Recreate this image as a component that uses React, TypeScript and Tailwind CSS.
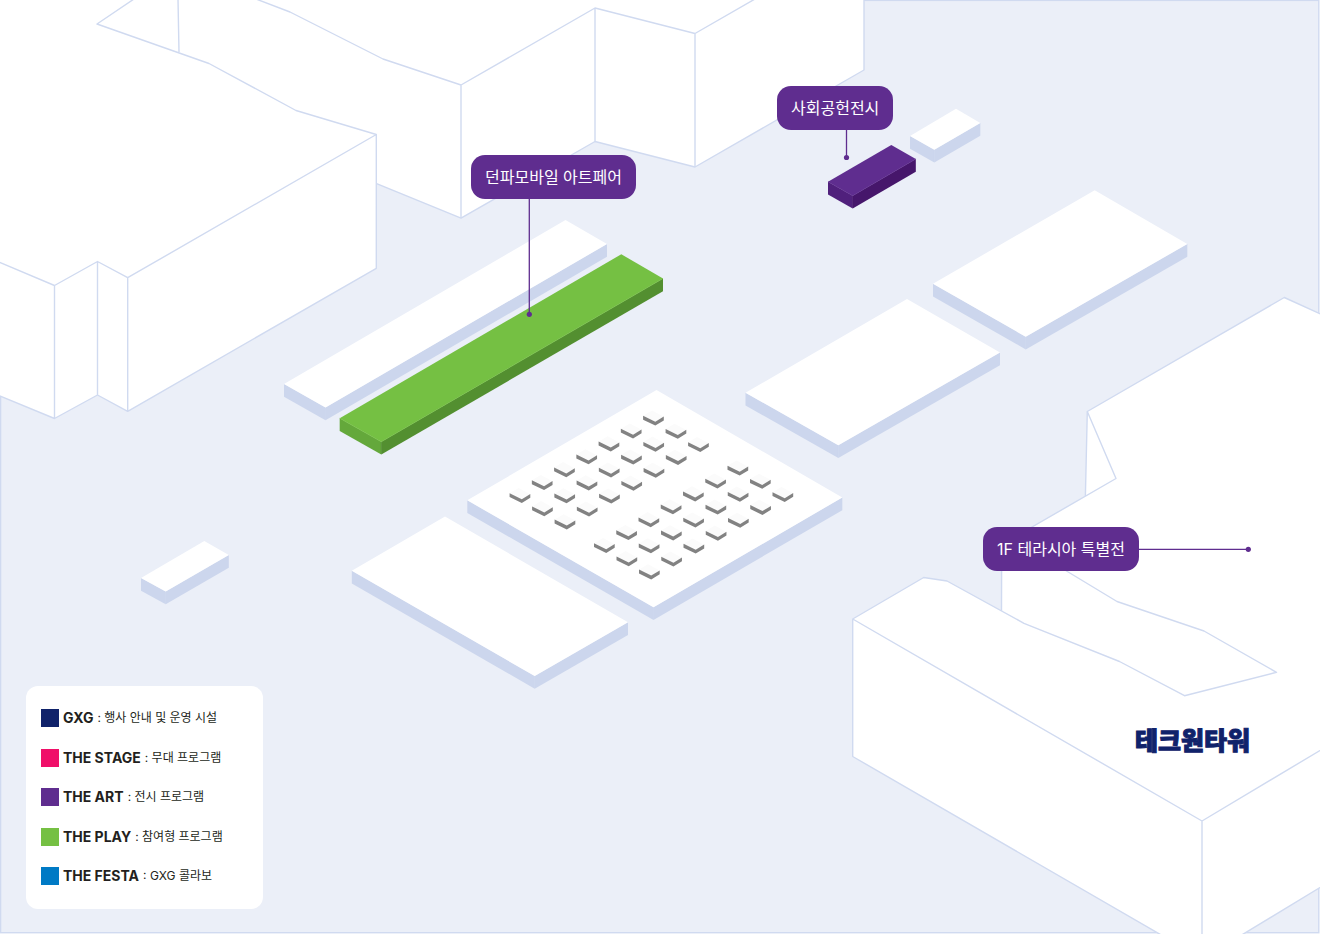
type Point = [number, number];

const MAP_WIDTH = 1320;
const MAP_HEIGHT = 934;

const FONT = "font-['Inter','Noto_Sans_CJK_KR',sans-serif]";

interface Slab {
  id: string;
  left: Point;
  top: Point;
  right: Point;
  bottom: Point;
  colors: [string, string, string];
}

const PLAIN: [string, string, string] = ['#ffffff', '#ccd6ed', '#ccd6ed'];
const ART: [string, string, string] = ['#5f2d8f', '#50207c', '#46166b'];
const PLAY: [string, string, string] = ['#75c043', '#64a83b', '#538f30'];

const SLABS: Slab[] = [
  { id: 'long', left: [284, 384], top: [565.5, 220], right: [607, 244], bottom: [325.5, 407.5], colors: PLAIN },
  { id: 'play', left: [339.7, 418.3], top: [621.3, 254.2], right: [663, 278.5], bottom: [381.3, 441.8], colors: PLAY },
  { id: 'north-small', left: [910, 136], top: [956, 108.7], right: [980.3, 123], bottom: [934.3, 149.7], colors: PLAIN },
  { id: 'art', left: [828, 181.7], top: [891.3, 145], right: [915.8, 159], bottom: [852.7, 195.7], colors: ART },
  { id: 'east', left: [933, 283.7], top: [1094.7, 190.3], right: [1187.3, 244], bottom: [1025.7, 336.7], colors: PLAIN },
  { id: 'middle', left: [745.5, 392.7], top: [907, 299], right: [1000, 352.5], bottom: [838.3, 445.3], colors: PLAIN },
  { id: 'market', left: [467.3, 500.3], top: [656.5, 390], right: [842.3, 497.5], bottom: [653.5, 607.2], colors: PLAIN },
  { id: 'south', left: [351.8, 570.8], top: [445, 516.5], right: [628, 622.3], bottom: [534.7, 676], colors: PLAIN },
  { id: 'west-small', left: [141, 578], top: [204.3, 541], right: [228.8, 555], bottom: [165.7, 591.5], colors: PLAIN },
];

const DEPTH = 12.7;

const BOOTHS: Point[] = (
  [
    [643.1, 415.8],
    [727.5, 465.8],
  ] as Point[]
).flatMap(([x, y]) =>
  Array.from({ length: 21 }, (_, n): Point => {
    const col = n % 3;
    const row = Math.floor(n / 3);
    return [x + col * 22.5 - row * 22.25, y + col * 13.2 + row * 12.9];
  }),
);

const PINS = [
  { text: '던파모바일 아트페어', x: 471, y: 155, line: [529.3, 198, 529.3, 314.3] },
  { text: '사회공헌전시', x: 777, y: 86, line: [846.5, 129, 846.5, 157.5] },
  { text: '1F 테라시아 특별전', x: 983, y: 527, line: [1130, 549.3, 1248.3, 549.3] },
];

const LEGEND = [
  { name: 'GXG', note: '행사 안내 및 운영 시설', swatch: 'bg-[#10226a]' },
  { name: 'THE STAGE', note: '무대 프로그램', swatch: 'bg-[#f00f69]' },
  { name: 'THE ART', note: '전시 프로그램', swatch: 'bg-[#5f2d8f]' },
  { name: 'THE PLAY', note: '참여형 프로그램', swatch: 'bg-[#75c043]' },
  { name: 'THE FESTA', note: 'GXG 콜라보', swatch: 'bg-[#007ac5]' },
];

const toPoints = (points: Point[]) => points.map((p) => p.join(',')).join(' ');
const lower = ([x, y]: Point): Point => [x, y + DEPTH];

function SlabShape({ slab }: { slab: Slab }) {
  const { left, top, right, bottom, colors } = slab;
  return (
    <g>
      <polygon points={toPoints([left, bottom, lower(bottom), lower(left)])} fill={colors[1]} />
      <polygon points={toPoints([bottom, right, lower(right), lower(bottom)])} fill={colors[2]} />
      <path d={`M${bottom.join(' ')}v${DEPTH - 0.6}`} stroke={colors[2]} strokeWidth="0.8" />
      <polygon points={toPoints([left, top, right, bottom])} fill={colors[0]} />
      {colors[0] !== '#ffffff' && (
        <polyline points={toPoints([left, bottom, right])} stroke={colors[0]} strokeWidth="0.6" />
      )}
    </g>
  );
}

function Buildings() {
  return (
    <g fill="#ffffff" stroke="#d0daf0" strokeWidth="1.4" strokeLinejoin="round">
      <path d="M60 -5H864V70L695 167L595 141.5L461 218.2L376 183.3L60 120Z" />
      <path
        fill="none"
        d="M256 -1L290 12L383 59L461 85L595 8L695 33.5L755 -1M461 85V218M595 8V141.5M695 33.5V167M178 -1L179 52"
      />
      <path
        stroke="none"
        d="M-5 -5H140L97 24L209 63.5L296 110.5L376.3 134.5V268.3L127.7 411.3L97.5 395L54.5 418.5L-5 394Z"
      />
      <path
        fill="none"
        d="M134 -1L97 24L209 63.5L296 110.5L376.3 134.5V268.3L127.7 411.3L97.5 395L54.5 418.5L-5 394M-5 260.5L54.5 285.5L97.5 261.5L127.7 277.7L376.3 134.5M54.5 285.5V418.5M97.5 261.5V395M127.7 277.7V411.3"
      />

      <path d="M1325 316L1284.3 297.5L1087.3 411.5L1085.3 500L1200 640H1325Z" />
      <path
        stroke="none"
        d="M1325 470H1113L1116 478.5L1001.7 544.5L1001.5 611L1184 720H1325Z"
      />
      <path
        fill="none"
        d="M1087.3 411.5L1116 478.5L1001.7 544.5L1001.5 611"
      />
      <path
        stroke="none"
        d="M852.7 619L923.7 577.5L947 581L1024 623.3L1119.5 661.5L1184.5 695.7L1325 660V884.5L1240 936H1163L852.7 756.5Z"
      />
      <path
        fill="none"
        d="M1045 558L1117 601.5L1204 631L1276.5 672.3L1184.5 695.7L1119.5 661.5L1024 623.3L947 581L923.7 577.5L852.7 619V756.5L1163 936M852.7 619L1202 821L1325 747.5M1202 821V936M1240 936L1325 884.5"
      />
    </g>
  );
}

function MapDrawing() {
  return (
    <svg
      viewBox={`0 0 ${MAP_WIDTH} ${MAP_HEIGHT}`}
      className="block h-auto w-full"
      fill="none"
      aria-hidden="true"
    >
      <rect x="0.6" y="0.4" width="1318.2" height="932.3" fill="#ebeff8" stroke="#d0daf0" strokeWidth="1.4" />
      <Buildings />
      {SLABS.map((slab) => (
        <SlabShape key={slab.id} slab={slab} />
      ))}
      {BOOTHS.map(([x, y]) => (
        <g key={`${x}-${y}`} transform={`translate(${x} ${y})`}>
          <path d="M0 0L9 -5.3L20.7 1L12.2 6.5Z" fill="#fbfbfb" />
          <path d="M0 0L12.2 6L20.7 0.8V4.6L12.2 9.8L0 3.9Z" fill="#828282" />
        </g>
      ))}
      {PINS.map(({ text, line: [x1, y1, x2, y2] }) => (
        <g key={text}>
          <line x1={x1} y1={y1} x2={x2} y2={y2} stroke="#5f2d8f" strokeWidth="1.3" />
          <circle cx={x2} cy={y2} r="2.6" fill="#5f2d8f" />
        </g>
      ))}
    </svg>
  );
}

const place = (x: number, y: number) => ({
  left: `${(x / MAP_WIDTH) * 100}%`,
  top: `${(y / MAP_HEIGHT) * 100}%`,
});

function Legend() {
  return (
    <ul className="absolute bottom-[25px] left-[26px] flex h-[223px] w-[237px] flex-col justify-between rounded-xl bg-white px-[15px] pt-[22px] pb-[23px] text-[#231f20]">
      {LEGEND.map(({ name, note, swatch }) => (
        <li key={name} className="flex h-5 items-center gap-1 whitespace-nowrap">
          <span className={`size-[18px] shrink-0 ${swatch}`} />
          <strong className="text-[14px] leading-5 font-bold">{name}</strong>
          <span className="text-[12px] leading-5">: {note}</span>
        </li>
      ))}
    </ul>
  );
}

export default function App() {
  return (
    <main lang="ko" className={`relative w-full overflow-hidden bg-white ${FONT}`}>
      <MapDrawing />
      {PINS.map(({ text, x, y }) => (
        <div
          key={text}
          className="absolute flex h-11 items-center rounded-[14px] bg-[#5f2d8f] px-[14px] text-[16px] leading-6 whitespace-nowrap text-white"
          style={place(x, y)}
        >
          {text}
        </div>
      ))}
      <div
        className="absolute text-[25px] leading-8 font-black whitespace-nowrap text-[#10226a] [-webkit-text-stroke:1px_#10226a]"
        style={place(1135, 725)}
      >
        테크원타워
      </div>
      <Legend />
    </main>
  );
}
